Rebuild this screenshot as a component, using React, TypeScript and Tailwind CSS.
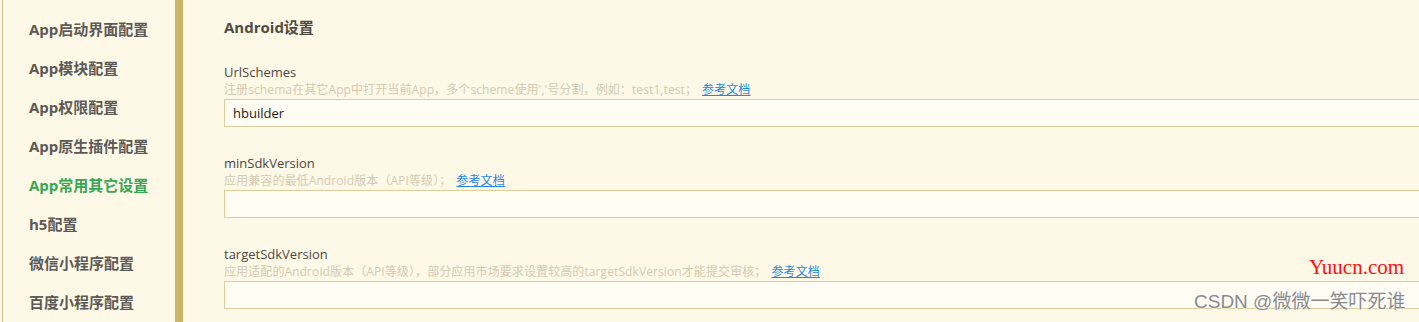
import React from 'react';

const menu = [
  'App启动界面配置',
  'App模块配置',
  'App权限配置',
  'App原生插件配置',
  'App常用其它设置',
  'h5配置',
  '微信小程序配置',
  '百度小程序配置',
];

const fields = [
  {
    label: 'UrlSchemes',
    hint: "注册schema在其它App中打开当前App，多个scheme使用','号分割，例如：test1,test；",
    value: 'hbuilder',
  },
  {
    label: 'minSdkVersion',
    hint: '应用兼容的最低Android版本（API等级）；',
    value: '',
  },
  {
    label: 'targetSdkVersion',
    hint: '应用适配的Android版本（API等级），部分应用市场要求设置较高的targetSdkVersion才能提交审核；',
    value: '',
  },
];

const font = { fontFamily: '"Open Sans", "Noto Sans CJK SC", sans-serif' };

export default function App() {
  return (
    <div className="relative flex h-[322px] w-[1419px] overflow-hidden bg-[#fef8e6]" style={font}>
      {/* Sidebar */}
      <div className="flex w-[175px] shrink-0 bg-[#fef8e7] pl-[2px]">
        <div className="flex flex-col border-l border-[#cbbf8c] pt-[19px] pl-[26px]">
          {menu.map((item, i) => (
            <div
              key={item}
              className={
                'h-[39px] shrink-0 text-[15px] leading-[20px] font-bold ' +
                (i === 4 ? 'text-[#35a853]' : 'text-[#5c5a57]')
              }
            >
              {item}
            </div>
          ))}
        </div>
      </div>
      <div className="w-[8px] shrink-0 bg-[#ccb467]" />

      {/* Main */}
      <div className="flex-1 pl-[41px] pt-[16px]">
        <div className="text-[15px] leading-[22px] font-bold text-[#4f4b45]">Android设置</div>
        <div className="mt-[25px] flex flex-col gap-[27px]">
          {fields.map((f) => (
            <div key={f.label} className="flex flex-col">
              <div className="text-[13px] leading-[18px] text-[#4b4844]">{f.label}</div>
              <div className="text-[12px] leading-[17px] tracking-[0.1px] text-[#d3cbb3]">
                {f.hint}
                <a className="ml-[5px] text-[#1f87e8] underline" href="#">
                  参考文档
                </a>
              </div>
              <div className="-mr-[4px] mt-[1px] h-[28px] border border-[#dccd9c] bg-[#fffcf3] pl-[8px] text-[13px] leading-[26px] text-[#1d1b18]">
                {f.value}
              </div>
            </div>
          ))}
        </div>
      </div>

      {/* Watermarks */}
      <div
        className="absolute top-[255px] left-[1309px] text-[21px] leading-[24px] text-[#ff1010]"
        style={{ fontFamily: '"Liberation Serif", serif' }}
      >
        Yuucn.com
      </div>
      <div
        className="absolute top-[289px] left-[1194px] text-[19px] leading-[26px] text-[#8a8a8a] [text-shadow:0_0_2px_#fff,0_0_2px_#fff]"
        style={{ fontFamily: '"Liberation Sans", "Noto Sans CJK SC", sans-serif' }}
      >
        CSDN @微微一笑吓死谁
      </div>
    </div>
  );
}
